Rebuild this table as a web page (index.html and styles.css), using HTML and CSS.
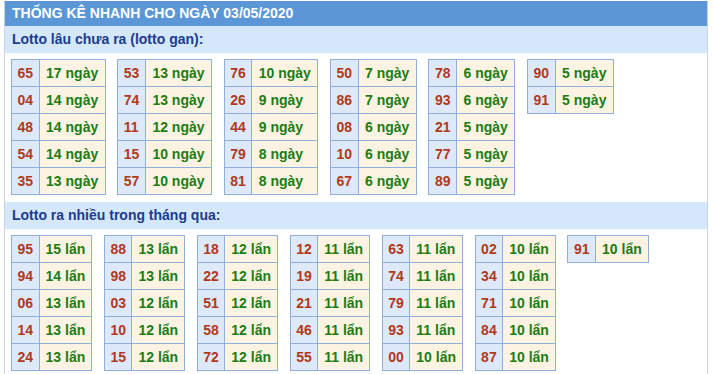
FILE: index.html
```html
<!DOCTYPE html>
<html lang="vi">
<head>
<meta charset="utf-8">
<title>Thống kê nhanh</title>
<link rel="stylesheet" href="styles.css">
</head>
<body>
<div class="box">
  <div class="title">THỐNG KÊ NHANH CHO NGÀY 03/05/2020</div>
  <div class="sub">Lotto lâu chưa ra (lotto gan):</div>
  <div class="grid">
    <table class="t"><tr><td class="n">65</td><td class="v">17 ngày</td></tr><tr><td class="n">04</td><td class="v">14 ngày</td></tr><tr><td class="n">48</td><td class="v">14 ngày</td></tr><tr><td class="n">54</td><td class="v">14 ngày</td></tr><tr><td class="n">35</td><td class="v">13 ngày</td></tr></table>
    <table class="t"><tr><td class="n">53</td><td class="v">13 ngày</td></tr><tr><td class="n">74</td><td class="v">13 ngày</td></tr><tr><td class="n">11</td><td class="v">12 ngày</td></tr><tr><td class="n">15</td><td class="v">10 ngày</td></tr><tr><td class="n">57</td><td class="v">10 ngày</td></tr></table>
    <table class="t"><tr><td class="n">76</td><td class="v">10 ngày</td></tr><tr><td class="n">26</td><td class="v">9 ngày</td></tr><tr><td class="n">44</td><td class="v">9 ngày</td></tr><tr><td class="n">79</td><td class="v">8 ngày</td></tr><tr><td class="n">81</td><td class="v">8 ngày</td></tr></table>
    <table class="t"><tr><td class="n">50</td><td class="v">7 ngày</td></tr><tr><td class="n">86</td><td class="v">7 ngày</td></tr><tr><td class="n">08</td><td class="v">6 ngày</td></tr><tr><td class="n">10</td><td class="v">6 ngày</td></tr><tr><td class="n">67</td><td class="v">6 ngày</td></tr></table>
    <table class="t"><tr><td class="n">78</td><td class="v">6 ngày</td></tr><tr><td class="n">93</td><td class="v">6 ngày</td></tr><tr><td class="n">21</td><td class="v">5 ngày</td></tr><tr><td class="n">77</td><td class="v">5 ngày</td></tr><tr><td class="n">89</td><td class="v">5 ngày</td></tr></table>
    <table class="t"><tr><td class="n">90</td><td class="v">5 ngày</td></tr><tr><td class="n">91</td><td class="v">5 ngày</td></tr></table>
  </div>
  <div class="sub">Lotto ra nhiều trong tháng qua:</div>
  <div class="grid grid-freq">
    <table class="t"><tr><td class="n">95</td><td class="v">15 lẩn</td></tr><tr><td class="n">94</td><td class="v">14 lẩn</td></tr><tr><td class="n">06</td><td class="v">13 lẩn</td></tr><tr><td class="n">14</td><td class="v">13 lẩn</td></tr><tr><td class="n">24</td><td class="v">13 lẩn</td></tr></table>
    <table class="t"><tr><td class="n">88</td><td class="v">13 lẩn</td></tr><tr><td class="n">98</td><td class="v">13 lẩn</td></tr><tr><td class="n">03</td><td class="v">12 lẩn</td></tr><tr><td class="n">10</td><td class="v">12 lẩn</td></tr><tr><td class="n">15</td><td class="v">12 lẩn</td></tr></table>
    <table class="t"><tr><td class="n">18</td><td class="v">12 lẩn</td></tr><tr><td class="n">22</td><td class="v">12 lẩn</td></tr><tr><td class="n">51</td><td class="v">12 lẩn</td></tr><tr><td class="n">58</td><td class="v">12 lẩn</td></tr><tr><td class="n">72</td><td class="v">12 lẩn</td></tr></table>
    <table class="t"><tr><td class="n">12</td><td class="v">11 lẩn</td></tr><tr><td class="n">19</td><td class="v">11 lẩn</td></tr><tr><td class="n">21</td><td class="v">11 lẩn</td></tr><tr><td class="n">46</td><td class="v">11 lẩn</td></tr><tr><td class="n">55</td><td class="v">11 lẩn</td></tr></table>
    <table class="t"><tr><td class="n">63</td><td class="v">11 lẩn</td></tr><tr><td class="n">74</td><td class="v">11 lẩn</td></tr><tr><td class="n">79</td><td class="v">11 lẩn</td></tr><tr><td class="n">93</td><td class="v">11 lẩn</td></tr><tr><td class="n">00</td><td class="v">10 lẩn</td></tr></table>
    <table class="t"><tr><td class="n">02</td><td class="v">10 lẩn</td></tr><tr><td class="n">34</td><td class="v">10 lẩn</td></tr><tr><td class="n">71</td><td class="v">10 lẩn</td></tr><tr><td class="n">84</td><td class="v">10 lẩn</td></tr><tr><td class="n">87</td><td class="v">10 lẩn</td></tr></table>
    <table class="t"><tr><td class="n">91</td><td class="v">10 lẩn</td></tr></table>
  </div>
</div>
</body>
</html>
```

FILE: styles.css
```css
html, body {
  margin: 0;
  padding: 0;
  background: #ffffff;
}
body {
  font-family: "Liberation Sans", Arial, sans-serif;
  font-size: 14px;
}
.box {
  margin: 1px 0 0 4px;
  width: 702px;
  border-left: 1px solid #c9d3df;
  border-right: 1px solid #c9d3df;
  min-height: 380px;
}
.title {
  height: 25px;
  line-height: 24px;
  background: #5b97d6;
  color: #ffffff;
  font-weight: bold;
  padding-left: 7px;
}
.sub {
  height: 27px;
  line-height: 27px;
  background: #d4e7fb;
  color: #1c3c8e;
  font-weight: bold;
  padding-left: 7px;
}
.grid {
  display: flex;
  flex-wrap: wrap;
  align-items: flex-start;
  gap: 11.6px;
  padding: 6px 0 7px 6px;
}
.t {
  border-collapse: collapse;
  border: 1px solid #91afdd;
}
.t td {
  border: 1px solid #91afdd;
  height: 26px;
  font-weight: bold;
  white-space: nowrap;
  box-sizing: border-box;
  line-height: 26px;
}
.t .n {
  background: #dde9f9;
  color: #b0391c;
  padding: 0 5.5px;
}
.t .v {
  background: #fdf3e2;
  color: #207c14;
  padding: 0 6.5px;
}
.grid-freq .t .v {
  padding: 0 6px;
}
```
